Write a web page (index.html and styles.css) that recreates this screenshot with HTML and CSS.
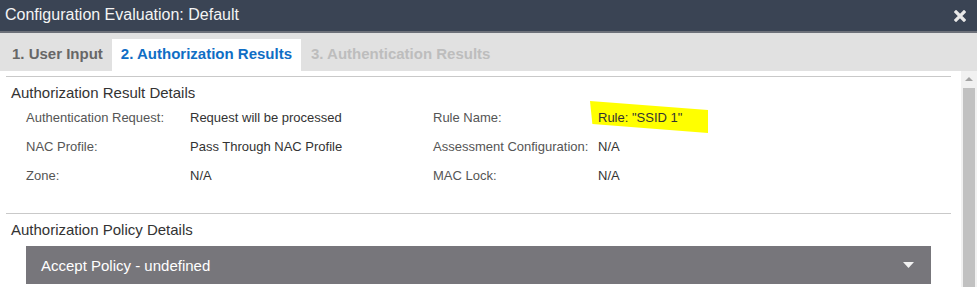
FILE: index.html
```html
<!DOCTYPE html>
<html>
<head>
<meta charset="utf-8">
<link rel="stylesheet" href="styles.css">
</head>
<body>
<div class="dialog">
  <div class="header">
    <span class="title">Configuration Evaluation: Default</span>
    <svg class="close" width="12" height="12" viewBox="0 0 12 12"><path d="M2 2 L10 10 M10 2 L2 10" stroke="#e8e8e8" stroke-width="3.2" stroke-linecap="square"/></svg>
  </div>
  <div class="tabs">
    <div class="tab">1. User Input</div>
    <div class="tab active">2. Authorization Results</div>
    <div class="tab disabled">3. Authentication Results</div>
  </div>
  <div class="main">
    <div class="content">
      <div class="rule"></div>
      <div class="section-title">Authorization Result Details</div>
      <div class="grid">
        <div class="label">Authentication Request:</div>
        <div class="value">Request will be processed</div>
        <div class="label">Rule Name:</div>
        <div class="value"><span class="hl">Rule: "SSID 1"</span></div>
        <div class="label">NAC Profile:</div>
        <div class="value">Pass Through NAC Profile</div>
        <div class="label">Assessment Configuration:</div>
        <div class="value">N/A</div>
        <div class="label">Zone:</div>
        <div class="value">N/A</div>
        <div class="label">MAC Lock:</div>
        <div class="value">N/A</div>
      </div>
      <div class="rule second"></div>
      <div class="section-title">Authorization Policy Details</div>
      <div class="policy">
        <span>Accept Policy - undefined</span>
        <svg width="11" height="6" viewBox="0 0 11 6"><path d="M0 0 H11 L5.5 6 Z" fill="#f2f2f2"/></svg>
      </div>
    </div>
    <div class="scrollbar">
      <div class="arrow"></div>
      <div class="thumb"></div>
    </div>
  </div>
</div>
</body>
</html>
```

FILE: styles.css
```css
html, body {
  margin: 0;
  padding: 0;
  background: #fff;
  overflow: hidden;
}
body {
  font-family: "Liberation Sans", Arial, sans-serif;
  width: 977px;
  height: 287px;
}
.header {
  height: 31px;
  background: #3a4454;
  border-bottom: 2px solid #6c7079;
  display: flex;
  align-items: center;
  justify-content: space-between;
  padding: 0 11px 0 5px;
}
.title {
  color: #f4f4f4;
  font-size: 16px;
  position: relative;
  top: -1px;
}
.close {
  display: block;
}
.tabs {
  height: 38px;
  background: #e1e1e1;
  display: flex;
  align-items: flex-end;
  padding-left: 2px;
}
.tab {
  height: 32px;
  line-height: 30px;
  padding: 0 10px;
  font-weight: bold;
  font-size: 15px;
  color: #676767;
}
.tab.active {
  background: #fff;
  color: #0f6ec5;
  padding: 0 9px;
  margin-left: -1px;
}
.tab.disabled {
  color: #bdbdbd;
}
.main {
  display: flex;
  height: 216px;
}
.content {
  flex: 1;
  padding: 5px 10px 0 6px;
}
.rule {
  height: 1px;
  background: #c9c9c9;
}
.rule.second {
  margin-top: 16px;
}
.section-title {
  font-size: 15px;
  color: #333;
  padding-left: 5px;
  margin-top: 7px;
  line-height: 18px;
}
.grid {
  display: grid;
  grid-template-columns: 164px 243px 165px 1fr;
  grid-auto-rows: 29px;
  padding-left: 20px;
  margin-top: 8px;
  font-size: 13px;
  line-height: 16px;
  align-items: start;
}
.label {
  color: #555;
}
.value {
  color: #333;
}
.hl {
  position: relative;
  z-index: 0;
}
.hl::before {
  content: "";
  position: absolute;
  z-index: -1;
  left: -8px;
  top: -9px;
  width: 118px;
  height: 32px;
  background: #ffff00;
  clip-path: polygon(0 0, 100% 28%, 100% 100%, 2% 72%);
}
.policy {
  margin: 7px 20px 0 20px;
  height: 38px;
  background: #77767b;
  color: #fff;
  font-size: 15px;
  display: flex;
  align-items: center;
  justify-content: space-between;
  padding: 0 17px 0 15px;
}
.policy svg {
  display: block;
}
.scrollbar {
  width: 16px;
  background: #f1f1f1;
  display: flex;
  flex-direction: column;
  align-items: center;
}
.arrow {
  margin-top: 6px;
  width: 0;
  height: 0;
  border-left: 4px solid transparent;
  border-right: 4px solid transparent;
  border-bottom: 4px solid #a3a3a3;
}
.thumb {
  margin-top: 7px;
  width: 12px;
  flex: 1;
  background: #c1c1c1;
}
```
